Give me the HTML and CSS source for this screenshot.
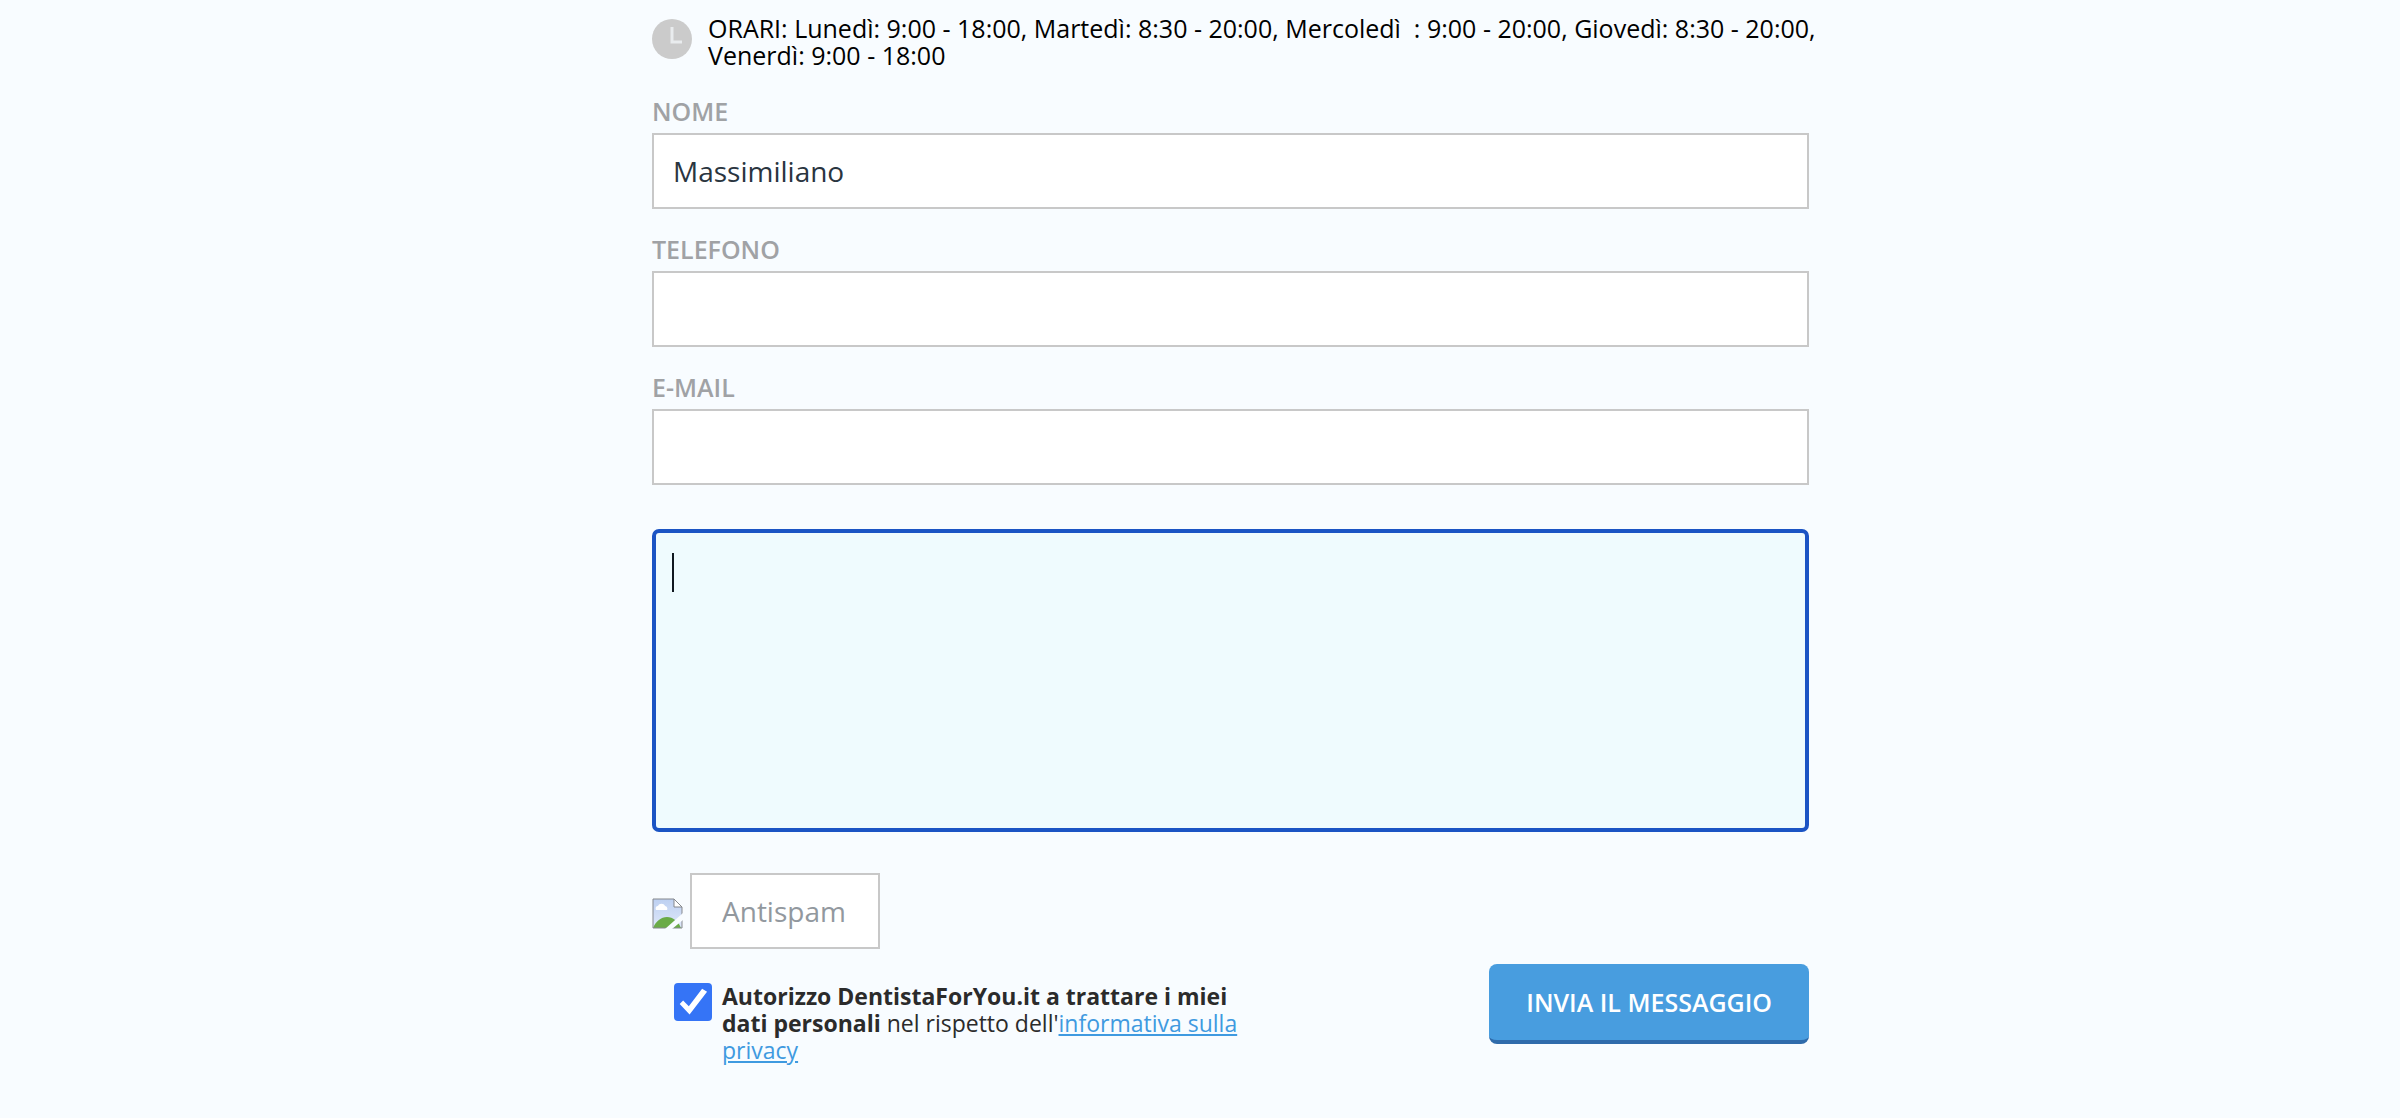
FILE: index.html
```html
<!DOCTYPE html>
<html lang="it">
<head>
    <meta charset="UTF-8">
    <meta name="viewport" content="width=device-width, initial-scale=1.0">
    <title>DentistaForYou.it</title>
    <link rel="stylesheet" href="styles.css">
</head>
<body>
    <main class="page">
        <form class="contact-form">
            <!-- Opening hours -->
            <div class="hours">
                <svg class="hours-icon" viewBox="0 0 40 40" aria-hidden="true">
                    <circle cx="20" cy="20" r="20" fill="#cbcbcb"/>
                    <path d="M20 8v15h10" fill="none" stroke="#e9ecee" stroke-width="3"/>
                </svg>
                <p>ORARI: Lunedì: 9:00 - 18:00, Martedì: 8:30 - 20:00, Mercoledì&nbsp; : 9:00 - 20:00, Giovedì: 8:30 - 20:00,<br>Venerdì: 9:00 - 18:00</p>
            </div>

            <!-- Contact fields -->
            <div class="field">
                <label for="nome">NOME</label>
                <input type="text" id="nome" value="Massimiliano">
            </div>
            <div class="field">
                <label for="telefono">TELEFONO</label>
                <input type="tel" id="telefono">
            </div>
            <div class="field">
                <label for="email">E-MAIL</label>
                <input type="email" id="email">
            </div>
            <div class="message">
                <textarea id="messaggio" aria-label="Messaggio" autofocus></textarea>
                <span class="caret"></span>
            </div>

            <!-- Captcha -->
            <div class="antispam">
                <svg class="captcha-icon" viewBox="0 0 31 31" aria-hidden="true">
                    <defs>
                        <linearGradient id="sky" x1="0" y1="0" x2="0" y2="1">
                            <stop offset="0" stop-color="#bdd0f1"/>
                            <stop offset="1" stop-color="#dfe8fa"/>
                        </linearGradient>
                    </defs>
                    <path d="M1 1h21l8 8v21H1z" fill="url(#sky)"/>
                    <path d="M4 12c-1-2 0-4 2-4 1-3 6-3 7 0 2 0 3 3 2 4z" fill="#fff"/>
                    <path d="M1 30c3-7 8-11 14-11s11 4 14 11z" fill="#6aab47"/>
                    <path d="M22 1v8h8z" fill="#fff"/>
                    <path d="M1 30V1h21l8 8v21zM22 1v8h8" fill="none" stroke="#85888d" stroke-width="1"/>
                    <path d="M13 31L31 15v7L20 31z" fill="#f8fcff"/>
                </svg>
                <input type="text" id="antispam" placeholder="Antispam" aria-label="Antispam">
            </div>

            <!-- Privacy consent and submit -->
            <div class="form-footer">
                <div class="privacy">
                    <input type="checkbox" id="privacy" checked>
                    <label for="privacy"><strong>Autorizzo DentistaForYou.it a trattare i miei dati personali</strong> nel rispetto dell'<a href="#">informativa sulla privacy</a></label>
                </div>
                <button type="submit" class="submit-btn">INVIA IL MESSAGGIO</button>
            </div>
        </form>
    </main>
</body>
</html>
```
FILE: styles.css
```css
* {
    margin: 0;
    padding: 0;
    box-sizing: border-box;
}

body {
    font-family: "Open Sans", "Noto Sans", sans-serif;
    font-size: 25px;
    line-height: 27px;
    background-color: #f8fcff;
    color: #000;
}

.page {
    display: grid;
    grid-template-columns: 652fr minmax(0, 1157fr) 591fr;
    padding: 15px 0 56px;
}

.contact-form {
    grid-column: 2;
}

/* Opening hours */
.hours {
    display: flex;
    gap: 16px;
    margin-bottom: 29px;
}

.hours p {
    white-space: nowrap;
}

.hours-icon {
    flex: none;
    width: 40px;
    height: 40px;
    margin-top: 4px;
}

/* Text fields */
.field {
    display: flex;
    flex-direction: column;
    gap: 8px;
    margin-bottom: 27px;
}

.field label {
    font-weight: 600;
    color: #a0a2a5;
}

.field input,
.antispam input {
    height: 76px;
    padding: 0 19px;
    border: 2px solid #c8c8c8;
    background-color: #fff;
    font-family: inherit;
    font-size: 28px;
    color: #2a353f;
}

.message {
    position: relative;
    margin-top: 44px;
}

.message textarea {
    display: block;
    width: 100%;
    height: 303px;
    padding: 20px 17px;
    border: 4px solid #1b54c4;
    border-radius: 7px;
    outline: none;
    resize: none;
    background-color: #effbfe;
    font-family: inherit;
    font-size: 28px;
    caret-color: transparent;
}

.caret {
    position: absolute;
    top: 24px;
    left: 20px;
    width: 2px;
    height: 39px;
    background-color: #101820;
    pointer-events: none;
}

/* Captcha */
.antispam {
    display: flex;
    align-items: center;
    gap: 7px;
    margin-top: 41px;
}

.captcha-icon {
    width: 31px;
    height: 31px;
    margin-top: 4px;
}

.antispam input {
    width: 190px;
    padding: 0 30px;
}

.antispam input::placeholder {
    color: #92989e;
    opacity: 1;
}

/* Consent and submit */
.form-footer {
    display: flex;
    justify-content: space-between;
    align-items: flex-start;
    margin-top: 15px;
}

.privacy {
    display: flex;
    gap: 10px;
    width: 52%;
    padding: 19px 0 0 22px;
    font-size: 23px;
    color: #2b2b2b;
}

.privacy input {
    appearance: none;
    flex: none;
    width: 38px;
    height: 38px;
    border-radius: 4px;
    background: #3574f6;
}

.privacy input:checked::before {
    content: "";
    display: block;
    width: 38px;
    height: 38px;
    background: #fff;
    clip-path: polygon(15% 55%, 24% 46%, 39% 61%, 74% 15%, 87% 23%, 41% 83%);
}

.privacy a {
    color: #3f9ae0;
}

.submit-btn {
    height: 80px;
    padding: 0 37px;
    border: none;
    border-bottom: 4px solid #2f6bab;
    border-radius: 8px;
    background-color: #489ddf;
    font-family: inherit;
    font-size: 25px;
    font-weight: 600;
    color: #fff;
    cursor: pointer;
}
```
